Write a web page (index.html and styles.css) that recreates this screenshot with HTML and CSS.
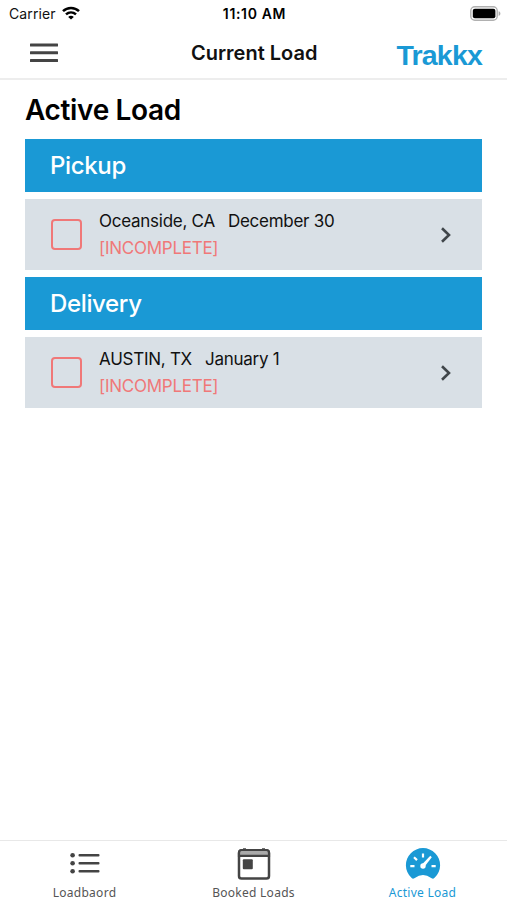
FILE: index.html
```html
<!DOCTYPE html>
<html lang="en">
<head>
<meta charset="utf-8">
<title>Current Load</title>
<link rel="stylesheet" href="styles.css">
</head>
<body>
<div class="status">
  <div class="carrier"><span class="carrier-name">Carrier</span>
    <svg width="18" height="14" viewBox="0 0 18 14" fill="none" stroke="#000" stroke-width="2.5"><path d="M1 5.2C5.4.9 12.6.9 17 5.2M4 8.4c2.9-2.7 7.1-2.7 10 0"/><path d="M9 13.6 6.2 10.9c1.5-1.4 4.1-1.4 5.6 0z" fill="#000" stroke="none"/></svg>
  </div>
  <div class="time">11:10 AM</div>
  <svg class="battery" width="31" height="15" viewBox="0 0 31 15"><rect x=".8" y=".8" width="26.4" height="13.4" rx="4" fill="#fff" stroke="#b0b0b0" stroke-width="1.4"/><rect x="2.8" y="2.8" width="22.6" height="9.4" rx="2" fill="#000"/><path d="M28.6 5.2c2.4.7 2.4 4 0 4.7z" fill="#aaa"/></svg>
</div>
<header class="header">
  <svg class="menu" width="28" height="20" viewBox="0 0 28 20" fill="#444"><rect y=".4" width="28" height="3" rx=".5"/><rect y="8.2" width="28" height="3" rx=".5"/><rect y="16" width="28" height="3" rx=".5"/></svg>
  <h1 class="page-title">Current Load</h1>
  <div class="brand">Trakkx</div>
</header>
<main class="content">
  <h2 class="heading">Active Load</h2>
  <section class="stop">
    <h3 class="stop-title">Pickup</h3>
    <div class="row">
      <span class="check"></span>
      <div class="info">
        <div class="line"><span>Oceanside, CA</span><span>December 30</span></div>
        <div class="state">[INCOMPLETE]</div>
      </div>
      <svg class="chevron" width="12" height="18" viewBox="0 0 12 18" fill="none" stroke="#40464a" stroke-width="2.6"><path d="m2 2.2 7 6.8-7 6.8"/></svg>
    </div>
  </section>
  <section class="stop">
    <h3 class="stop-title">Delivery</h3>
    <div class="row">
      <span class="check"></span>
      <div class="info">
        <div class="line"><span>AUSTIN, TX</span><span>January 1</span></div>
        <div class="state">[INCOMPLETE]</div>
      </div>
      <svg class="chevron" width="12" height="18" viewBox="0 0 12 18" fill="none" stroke="#40464a" stroke-width="2.6"><path d="m2 2.2 7 6.8-7 6.8"/></svg>
    </div>
  </section>
</main>
<nav class="tabs">
  <div class="tab">
    <svg width="36" height="36" viewBox="0 0 36 36" fill="#444"><circle cx="5.6" cy="9.2" r="2.3"/><circle cx="5.6" cy="17.2" r="2.3"/><circle cx="5.6" cy="25.2" r="2.3"/><rect x="11.5" y="8" width="21" height="2.4" rx="1"/><rect x="11.5" y="16" width="21" height="2.4" rx="1"/><rect x="11.5" y="24" width="21" height="2.4" rx="1"/></svg>
    <span>Loadbaord</span>
  </div>
  <div class="tab">
    <svg width="36" height="36" viewBox="0 0 36 36"><rect x="3" y="4.5" width="30" height="28" rx="2.6" fill="#fff" stroke="#444" stroke-width="2.5"/><path d="M3 9.8V7Q3 4 5.5 4h25Q33 4 33 7v2.8z" fill="#aaa" stroke="#444" stroke-width="2.2"/><path d="M8.5 2.2V5m19-2.8V5" stroke="#444" stroke-width="3"/><rect x="6.8" y="13.2" width="10" height="10" rx="1" fill="#444"/></svg>
    <span>Booked Loads</span>
  </div>
  <div class="tab active">
    <svg width="36" height="36" viewBox="0 0 36 36"><path d="M6.2 31.6A17.1 17.1 0 1 1 29.8 31.6Q28.5 33.6 26.2 32Q18 26.2 9.8 32Q7.5 33.6 6.2 31.6Z" fill="#1a99d5"/><path d="M5.3 20.2h4.2m17 0h4.2M9 11.3l3 2.8M18 7.5v4" stroke="#fff" stroke-width="2.2"/><path d="m17.2 18.2 8.1-8.4 1.5 1.4-7 9.1z" fill="#fff"/><circle cx="18" cy="20" r="2.7" fill="#fff"/></svg>
    <span>Active Load</span>
  </div>
</nav>
</body>
</html>
```
FILE: styles.css
```css
* { box-sizing: border-box; }
body { margin: 0; height: 900px; display: flex; flex-direction: column; background: #fff; color: #111; font-family: Inter, "Liberation Sans", sans-serif; overflow: hidden; }
h1, h2, h3 { margin: 0; font-weight: 600; white-space: nowrap; }
svg { display: block; flex: none; }
.status { height: 27px; display: grid; grid-template-columns: 1fr auto 1fr; align-items: center; padding: 0 6px 0 9px; }
.carrier { display: flex; align-items: center; gap: 6px; font-size: 14px; line-height: 20px; letter-spacing: .1px; }
.carrier svg { margin-top: -2px; }
.carrier-name { width: 47px; }
.time { font-size: 14px; font-weight: 600; letter-spacing: .65px; margin-right: 1px; color: #000; }
.battery { justify-self: end; margin-top: -1px; }
.header { height: 53px; border-bottom: 2px solid #ededed; display: grid; grid-template-columns: 161px auto 1fr; align-items: center; padding: 0 25px 0 30px; }
.menu { margin-top: 1px; }
.page-title { font-size: 20px; line-height: 28px; }
.brand { justify-self: end; padding-top: 5px; font: bold 28.5px/32px "Liberation Sans", sans-serif; letter-spacing: -.8px; color: #1a99d5; }
.content { flex: 1; padding: 12px 25px 0; }
.heading { font-size: 28px; line-height: 36px; letter-spacing: -.35px; color: #000; margin-bottom: 11px; }
.stop { margin-bottom: 7px; }
.stop-title { height: 53px; padding-left: 25px; background: #1a99d5; color: #fff; font-size: 24px; line-height: 54px; font-weight: 500; letter-spacing: -.35px; margin-bottom: 7px; }
.row { height: 71px; display: flex; align-items: center; background: #d9e0e6; padding: 0 30px 0 26px; }
.check { width: 31px; height: 31px; border: 2.4px solid #f07878; border-radius: 4px; margin-right: 17px; }
.info { flex: 1; font-size: 17px; line-height: 27px; letter-spacing: -.26px; padding-top: 1px; }
.line { display: flex; gap: 13px; white-space: nowrap; }
.state { color: #f07878; }
.tabs { height: 60px; border-top: 1px solid #e8e8e8; display: grid; grid-template-columns: repeat(3, 1fr); }
.tab { display: flex; flex-direction: column; align-items: center; padding-top: 5px; color: #555; font: 12px/20px "Noto Sans", sans-serif; letter-spacing: .27px; white-space: nowrap; }
.tab span { margin-top: 1px; }
.active { color: #1a99d5; }
```
